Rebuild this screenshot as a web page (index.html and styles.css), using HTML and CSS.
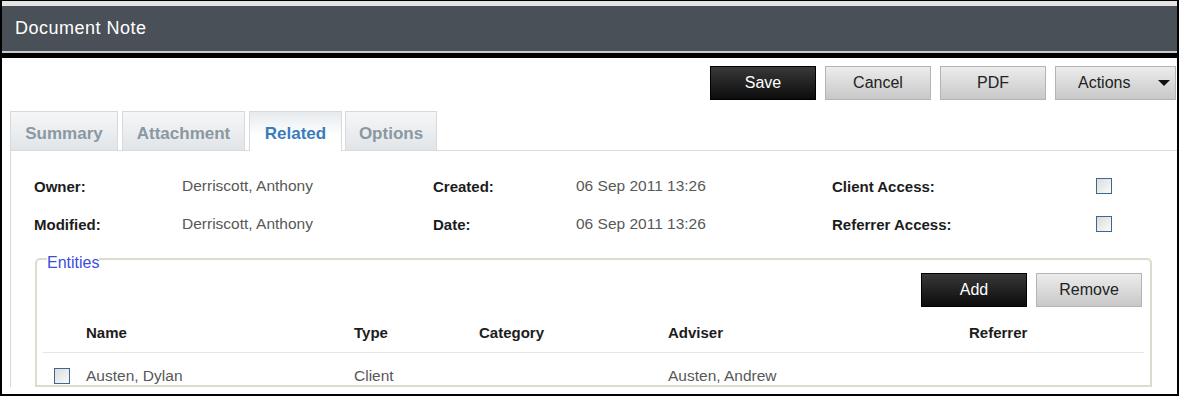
FILE: index.html
```html
<!DOCTYPE html>
<html lang="en">
  <head>
    <meta charset="UTF-8" />
    <title>Document Note</title>
    <link rel="stylesheet" href="styles.css">
  </head>
  <body>
    <div class="window">
      <div class="titlebar">Document Note</div>
      <div class="toolbar">
        <button class="btn btn-dark">Save</button>
        <button class="btn">Cancel</button>
        <button class="btn">PDF</button>
        <button class="btn btn-menu">Actions <span class="caret"></span></button>
      </div>
      <div class="tabs">
        <div class="tab tab-summary">Summary</div>
        <div class="tab tab-attach">Attachment</div>
        <div class="tab tab-related active">Related</div>
        <div class="tab tab-options">Options</div>
      </div>
      <div class="panel">
        <div class="info">
          <div class="lbl">Owner:</div>
          <div class="val">Derriscott, Anthony</div>
          <div class="lbl">Created:</div>
          <div class="val">06 Sep 2011 13:26</div>
          <div class="lbl">Client Access:</div>
          <div><span class="check"></span></div>
          <div class="lbl">Modified:</div>
          <div class="val">Derriscott, Anthony</div>
          <div class="lbl">Date:</div>
          <div class="val">06 Sep 2011 13:26</div>
          <div class="lbl">Referrer Access:</div>
          <div><span class="check"></span></div>
        </div>
        <fieldset class="entities">
          <legend>Entities</legend>
          <div class="entity-actions">
            <button class="btn btn-dark">Add</button>
            <button class="btn">Remove</button>
          </div>
          <div class="grid-row grid-head">
            <div></div>
            <div>Name</div>
            <div>Type</div>
            <div>Category</div>
            <div>Adviser</div>
            <div>Referrer</div>
          </div>
          <div class="grid-row grid-body">
            <div class="cell-check"><span class="check"></span></div>
            <div>Austen, Dylan</div>
            <div>Client</div>
            <div></div>
            <div>Austen, Andrew</div>
            <div></div>
          </div>
        </fieldset>
      </div>
    </div>
  </body>
</html>
```

FILE: styles.css
```css
body {
  margin: 0;
  background: #fff;
  font-family: "Liberation Sans", Arial, sans-serif;
  color: #222;
}

.window {
  width: 1179px;
  height: 396px;
  box-sizing: border-box;
  border: 2px solid #000;
  border-top-width: 1px;
  overflow: hidden;
  padding-top: 5px;
  background: #fff linear-gradient(#e4e4e4, #e4e4e4) no-repeat;
  background-size: 100% 5px;
}

.titlebar {
  height: 45px;
  background: #4a5057;
  color: #fff;
  font-size: 18px;
  letter-spacing: 0.5px;
  line-height: 45px;
  padding-left: 13px;
  border-bottom: 2px solid #c9cbcd;
  box-shadow: 0 5px 0 #000;
  margin-bottom: 5px;
}

.toolbar {
  display: flex;
  justify-content: flex-end;
  gap: 9px;
  padding: 8px 1px 0 0;
}

.btn {
  width: 106px;
  height: 34px;
  font-family: inherit;
  font-size: 16px;
  color: #222;
  border: 1px solid #b4b4b4;
  background: linear-gradient(#ececec, #c8c8c8);
  cursor: pointer;
  padding: 0;
}

.btn-dark {
  color: #fff;
  border-color: #000;
  background: linear-gradient(#383838, #0c0c0c);
}

.btn-menu {
  width: 121px;
  display: flex;
  align-items: center;
  padding: 0 5px 0 22px;
}

.caret {
  margin-left: auto;
  width: 0;
  height: 0;
  border-left: 6px solid transparent;
  border-right: 6px solid transparent;
  border-top: 6px solid #111;
}

.tabs {
  display: flex;
  margin: 11px 0 0 8px;
  height: 39px;
  position: relative;
  z-index: 1;
}

.tab {
  box-sizing: border-box;
  height: 39px;
  margin-right: 4px;
  border: 1px solid #d6dadd;
  border-bottom: none;
  background: linear-gradient(#f5f6f7, #e1e5e8);
  color: #8a98a2;
  font-weight: bold;
  font-size: 17px;
  text-align: center;
  line-height: 44px;
}

.tab-summary { width: 108px; }
.tab-attach { width: 123px; }
.tab-related { width: 93px; margin-right: 3px; }
.tab-options { width: 92px; }

.tab.active {
  height: 40px;
  background: linear-gradient(#e6eaed, #fff 60%);
  color: #3b7cbb;
}

.panel {
  margin-left: 8px;
  border-left: 1px solid #d8d8d8;
  border-top: 1px solid #d8dcdf;
  padding-top: 16px;
}

.info {
  display: grid;
  grid-template-columns: 148px 251px 143px 256px 264px 40px;
  grid-auto-rows: 38px;
  align-items: center;
  padding-left: 23px;
  font-size: 15px;
}

.lbl {
  font-weight: bold;
  color: #1c1c1c;
}

.val {
  color: #585858;
  font-size: 15.5px;
}

.check {
  display: block;
  width: 16px;
  height: 16px;
  box-sizing: border-box;
  border: 1px solid #3f6690;
  background: linear-gradient(135deg, #dcdcdc, #fafafa);
}

.entities {
  margin: 4px 25px 0 24px;
  padding: 0 6px;
  border: 2px solid #dcdccd;
  border-radius: 5px 5px 0 0;
  min-width: 0;
}

.entities legend {
  margin-left: 4px;
  padding: 8px 0 0;
  font-size: 16px;
  line-height: 16px;
  color: #3b4ee0;
}

.entity-actions {
  display: flex;
  justify-content: flex-end;
  gap: 9px;
  margin: 2px 2px 0 0;
}

.grid-row {
  display: grid;
  grid-template-columns: 43px 268px 125px 189px 301px 1fr;
  font-size: 15px;
  line-height: 18px;
}

.grid-head {
  height: 46px;
  box-sizing: border-box;
  align-items: end;
  padding-bottom: 10px;
  border-bottom: 1px solid #e6e6e6;
  font-weight: bold;
  color: #1c1c1c;
}

.grid-body {
  padding-top: 14px;
  color: #585858;
  font-size: 15.5px;
  align-items: center;
}

.cell-check {
  padding-left: 11px;
}
```
